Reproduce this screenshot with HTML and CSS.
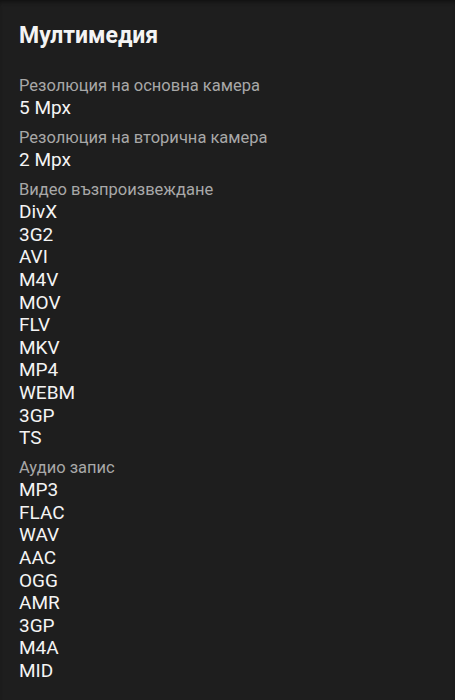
FILE: index.html
```html
<!DOCTYPE html>
<html lang="bg">

<head>
    <meta charset="UTF-8">
    <meta name="viewport" content="width=device-width, initial-scale=1.0">
    <title>Мултимедия</title>
    <link rel="stylesheet" href="styles.css">
</head>

<body>
    <div class="section">
        <h1>Мултимедия</h1>
        <div class="spec">
            <div class="label">Резолюция на основна камера</div>
            <div class="value">5 Mpx</div>
        </div>
        <div class="spec">
            <div class="label">Резолюция на вторична камера</div>
            <div class="value">2 Mpx</div>
        </div>
        <div class="spec">
            <div class="label">Видео възпроизвеждане</div>
            <div class="value">DivX</div>
            <div class="value">3G2</div>
            <div class="value">AVI</div>
            <div class="value">M4V</div>
            <div class="value">MOV</div>
            <div class="value">FLV</div>
            <div class="value">MKV</div>
            <div class="value">MP4</div>
            <div class="value">WEBM</div>
            <div class="value">3GP</div>
            <div class="value">TS</div>
        </div>
        <div class="spec">
            <div class="label">Аудио запис</div>
            <div class="value">MP3</div>
            <div class="value">FLAC</div>
            <div class="value">WAV</div>
            <div class="value">AAC</div>
            <div class="value">OGG</div>
            <div class="value">AMR</div>
            <div class="value">3GP</div>
            <div class="value">M4A</div>
            <div class="value">MID</div>
        </div>
    </div>
</body>

</html>
```

FILE: styles.css
```css
* {
    padding: 0;
    margin: 0;
}

html,
body {
    height: 100%;
}

body {
    background: #1e1e1e;
    font-family: Roboto, "Noto Sans", sans-serif;
    color: #f4f4f4;
    box-shadow: inset 0 4px 4px -2px #111;
}

.section {
    padding: 22px 19px 0;
}

.section h1 {
    font-size: 23px;
    font-weight: 700;
    line-height: 28px;
    margin-bottom: 24px;
}

.section .spec {
    margin-bottom: 6.5px;
}

.section .label {
    font-size: 16.5px;
    line-height: 23px;
    color: #a8a8a8;
}

.section .value {
    font-size: 19px;
    line-height: 22.6px;
}
```
